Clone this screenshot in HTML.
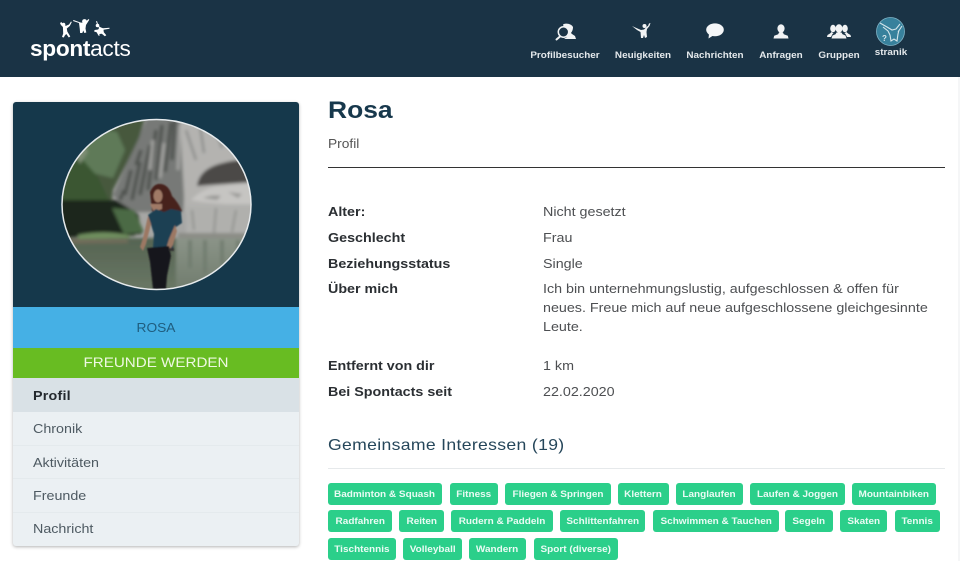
<!DOCTYPE html>
<html lang="de"><head><meta charset="utf-8"><title>Rosa</title>
<style>
html,body{margin:0;padding:0;background:#fff}
body{position:relative;width:960px;height:561px;overflow:hidden;font-family:"Liberation Sans",sans-serif;color:#444}
.b{position:absolute}
.t{position:absolute;white-space:nowrap;transform:scaleX(1.1);transform-origin:0 50%;line-height:16px;filter:blur(.3px)}
.c{transform-origin:50% 50%;text-align:center}
.nl{font-size:9px;font-weight:bold;color:#e4e9ec;width:100px;top:47px}
.k{font-size:13px;font-weight:bold;color:#2b2f33;left:328px}
.v{font-size:13px;color:#4d4f52;left:543px}
.m{font-size:13px;color:#4e5a62;left:33px}
.tag{position:absolute;height:22px;background:#2bcf8a;border-radius:3px;color:#eafbf4;font-size:9px;font-weight:bold;line-height:23px;text-align:center;white-space:nowrap}
.tag span{display:inline-block;transform:scaleX(1.11);filter:blur(.3px)}
svg{position:absolute;overflow:visible}
</style></head><body>

<div class="b" style="left:0;top:0;width:960px;height:77px;background:#1a3345"></div>
<div class="b" style="left:958px;top:77px;width:2px;height:484px;background:#f5f6f7"></div>

<!-- logo -->
<svg style="left:0;top:0" width="140" height="70" fill="#fff">
<path d="M60 23l1.500-1 1.500 3 1-1.500 1 .5.500 2 3.500-1.500 2-3 .8.500-2 4-3 2.500.5 3 1.800 3 1.200 2-1.500 1-2.500-3.500-1.500 1.500-1 2-1.800-.5 1.200-3.500-.3-6.500-2-2z"/>
<circle cx="63.500" cy="24.500" r="1.800"/>
<path d="M73 21l.5-1 7 2.500 4 .5 4-4 .8.700-3.300 5.300-.5 3.500.8 4-2 .5-1-2.500-1 2.500-2.200 0-.3-4-.8-6z"/>
<circle cx="84.500" cy="21.500" r="2.400"/>
<path d="M96 21.500l1-.5 1.500 5 2.500 1.500 2 .8 6.500-.5 0 1-6 1 .3 2.500 2.500 3-1.500 1-3-2.500-2.500 .2 .5 1.500-1.200 .3-2-3.500-2.500-.8.500-1.500 3.500-.5 1-1.500-1.500-2.500z"/>
<circle cx="97.500" cy="25.500" r="1.800"/>
</svg>
<div class="t" style="left:30px;top:39px;font-size:22px;font-weight:bold;color:#fff;line-height:20px;letter-spacing:-.3px;transform:scaleX(1.03)">spont<span style="font-weight:normal">acts</span></div>

<!-- nav icons -->
<svg style="left:555px;top:22px" width="24" height="20">
<path d="M8 2.500a7 6 0 0 1 10 2.500c0 3-1 4.500-2 6l1 1 3 2 1 3H9l3-2-1-2z" fill="#f1f3f4"/>
<circle cx="8.500" cy="10" r="5.200" fill="#1a3345" stroke="#f1f3f4" stroke-width="1.500"/>
<path d="M5 14.500L1.500 17.500" stroke="#f1f3f4" stroke-width="2" stroke-linecap="round"/>
</svg>
<svg style="left:631px;top:21px" width="24" height="20" fill="#f1f3f4">
<path d="M1 5l5.500 2.500 3.500 1.500 3-.5 3-3 1-.5 1-2.500 1.500-.5-1 3-2.500 3-.5 3 .5 5-2 1-1-3-1 3-2 0-.500-6L6 9z"/><circle cx="13.500" cy="5" r="2"/>
</svg>
<svg style="left:705px;top:23px" width="20" height="17" fill="#f4f6f7">
<ellipse cx="10" cy="6.800" rx="8.800" ry="6.400"/><path d="M4 11l-.5 4.500L9 12z"/>
</svg>
<svg style="left:773px;top:24px" width="16" height="15" fill="#f1f3f4">
<ellipse cx="8" cy="4.500" rx="3.600" ry="4.300"/><path d="M6 8.500h4l.8 1.800 4 1.500.7 2.700H.5l.7-2.700 4-1.500z"/>
</svg>
<svg style="left:827px;top:24px" width="24" height="16" fill="#f1f3f4">
<ellipse cx="12" cy="4.500" rx="3.500" ry="4.200"/><path d="M9.500 8.500h5l1 1.800 3 1.200 1 3H4.500l1-3 3-1.200z"/>
<ellipse cx="6" cy="4.500" rx="2.800" ry="3.800"/><path d="M4.500 8L3 9.500.5 11 0 13h4l1.500-3 1-.8z"/>
<ellipse cx="18" cy="4.500" rx="2.800" ry="3.800"/><path d="M19.500 8L21 9.500 23.500 11l.5 2h-4l-1.500-3-1-.8z"/>
</svg>
<svg style="left:876px;top:17px" width="29" height="29">
<circle cx="14.500" cy="14.500" r="14" fill="#38819c" stroke="#7fb3c6" stroke-width=".8"/>
<path d="M4 6l7 4 5 3 4-1 4-5M7 10l5 4 2 4 1 6 3-2 3 2 1-7 1-4M22 15l4-6" fill="none" stroke="#d5e5ea" stroke-width="1.100"/>
<text x="6" y="24" font-family="Liberation Sans" font-size="8" font-weight="bold" fill="#d5e5ea">?</text>
</svg>

<div class="t c nl" style="left:515px">Profilbesucher</div>
<div class="t c nl" style="left:593px">Neuigkeiten</div>
<div class="t c nl" style="left:665px">Nachrichten</div>
<div class="t c nl" style="left:731px">Anfragen</div>
<div class="t c nl" style="left:789px">Gruppen</div>
<div class="t c nl" style="left:841px;top:44px">stranik</div>

<!-- sidebar -->
<div class="b" style="left:13px;top:102px;width:286px;height:444px;border-radius:3px;box-shadow:0 1px 3px rgba(0,0,0,.3);background:#ebf0f3;overflow:hidden">
 <div class="b" style="left:0;top:0;width:286px;height:205px;background:#15384b"></div>
 <div class="b" style="left:0;top:205px;width:286px;height:41px;background:#45b0e5"></div>
 <div class="b" style="left:0;top:246px;width:286px;height:30px;background:#68bc22"></div>
 <div class="b" style="left:0;top:276px;width:286px;height:34px;background:#d9e1e6"></div>
 <div class="b" style="left:0;top:343px;width:286px;height:1px;background:#e4eaed"></div>
 <div class="b" style="left:0;top:376px;width:286px;height:1px;background:#e4eaed"></div>
 <div class="b" style="left:0;top:410px;width:286px;height:1px;background:#e4eaed"></div>
</div>

<svg style="left:61px;top:118px" width="192" height="173" viewBox="61 118 192 173">
<defs>
<clipPath id="cp"><ellipse cx="156.500" cy="204.500" rx="94" ry="84.500"/></clipPath>
<filter id="bl" x="-5%" y="-5%" width="110%" height="110%"><feGaussianBlur stdDeviation="1.500"/></filter>
<filter id="bs" x="-20%" y="-20%" width="140%" height="140%"><feGaussianBlur stdDeviation=".7"/></filter>
<linearGradient id="w" x1="0" y1="0" x2="0" y2="1"><stop offset="0" stop-color="#556452"/><stop offset="1" stop-color="#6b7866"/></linearGradient>
<linearGradient id="w2" x1="0" y1="0" x2="0" y2="1"><stop offset="0" stop-color="#8b9488"/><stop offset="1" stop-color="#6f7b6c"/></linearGradient>
</defs>
<g clip-path="url(#cp)">
<rect x="60" y="118" width="195" height="175" fill="#a6a6a4"/>
<g filter="url(#bl)">
<!-- dark streaked rock -->
<path d="M147 118L113 195 128 212H183L190 118z" fill="#777977"/>
<path d="M125 195l6-25M132 200l8-38M140 195l10-50M148 190l8-60M156 180l6-55M165 172l6-50M172 160l3-40M136 165l5-15M120 200l4-10" stroke="#4f5250" stroke-width="3.500" fill="none"/>
<path d="M150 170l3-30M160 178l4-35M178 170l2-45" stroke="#a4a4a2" stroke-width="3" fill="none"/>
<!-- light rock -->
<path d="M180 118h75v95h-70l-3-55z" fill="#b4b3b0"/>
<path d="M186 130l10 30M200 125l4 28M216 128l6 20" stroke="#8e8f8d" stroke-width="2.500" fill="none"/>
<!-- lion niche -->
<path d="M197 186q2-16 22-22 16-5 33-4v22l-30 2-14 1z" fill="#4b4847"/>
<path d="M191 200q14-14 32-14 16-3 32-2v20h-30l-22-2z" fill="#c6c5c2"/>
<path d="M203 198q10-4 18-2l-4 4zM228 192l14 2-4 4z" fill="#9a9a97"/>
<path d="M186 206h70v30h-70z" fill="#b0b0ad"/>
<path d="M216 208l-2 25M236 210l-4 22M192 210l2 20" stroke="#8d8f8b" stroke-width="1.800"/>
<!-- trees -->
<path d="M60 118h85l-6 20-12 25-14 27-2 20 24 10v16H60z" fill="#46593e"/>
<path d="M95 128l22 4 8 18-12 28-24-6-12-22z" fill="#5f7a58"/>
<path d="M60 165l22-6 16 18 14 30-20 4-32 0z" fill="#3a5633"/>
<path d="M73 150l10-8 5 10-8 12z" fill="#7e8e74"/>
<path d="M60 200h56l22 14 4 20-82 4z" fill="#1d281a"/>
<path d="M112 208l22 2 10 22-20 2z" fill="#4c6a44"/>
<!-- shore -->
<path d="M178 233h78v7h-78z" fill="#8b8c86"/>
<rect x="60" y="238" width="130" height="55" fill="url(#w)"/>
<rect x="176" y="238" width="80" height="55" fill="url(#w2)"/>
<path d="M190 240v28M205 240v34M222 240v24M238 240v20" stroke="#6f7c6e" stroke-width="3.500" fill="none"/>
<path d="M78 235q26-5 50 0l2 3-52 1z" fill="#6f8f5e"/>
<path d="M68 239l60 0v4l-60 1z" fill="#6f6c5a"/>
</g>
<g filter="url(#bs)">
<path d="M150 192q4-9 11-8 8 1 11 12 6 6 10 15l-8 5-14-2-8-3z" fill="#47201e"/>
<ellipse cx="158" cy="196" rx="4.500" ry="6.500" fill="#a07a66"/>
<path d="M150 204h12v5l-8 3z" fill="#a07a66"/>
<path d="M148 215l8-6 8 3 7-3 10 2 1 12-6 4-2 6-1 15-20 0 1-14z" fill="#1a3f52"/>
<path d="M148 216l-5 22-3 9 3 4 3-7 5-20zM175 225l2 6-4 14-5 7-2-3 3-10z" fill="#9c7864"/>
<path d="M147 248l22-2 2 10-4 20-1 13h-13l-3-27z" fill="#14151a"/>
<rect x="169" y="248" width="5" height="3" fill="#333"/>
</g>
</g>
<ellipse cx="156.500" cy="204.500" rx="94.500" ry="85" fill="none" stroke="#e6eaec" stroke-width="1.500"/>
</svg>

<div class="t c" style="left:56px;top:320px;width:200px;font-size:12.500px;color:#1f5d7f">ROSA</div>
<div class="t c" style="left:56px;top:354.500px;width:200px;font-size:13.800px;color:#eef8e2">FREUNDE WERDEN</div>
<div class="t m" style="top:388px;font-weight:bold;color:#24292e;letter-spacing:.2px">Profil</div>
<div class="t m" style="top:421px">Chronik</div>
<div class="t m" style="top:455px">Aktivitäten</div>
<div class="t m" style="top:488px">Freunde</div>
<div class="t m" style="top:521px">Nachricht</div>

<!-- main -->
<div class="t" style="left:328px;top:99px;font-size:24px;font-weight:bold;color:#17384c;line-height:24px">Rosa</div>
<div class="t" style="left:328px;top:136px;font-size:12.500px;color:#555">Profil</div>
<div class="b" style="left:328px;top:167px;width:617px;height:1px;background:#333"></div>

<div class="t k" style="top:204px">Alter:</div><div class="t v" style="top:204px">Nicht gesetzt</div>
<div class="t k" style="top:229.500px">Geschlecht</div><div class="t v" style="top:229.500px">Frau</div>
<div class="t k" style="top:255.500px">Beziehungsstatus</div><div class="t v" style="top:255.500px">Single</div>
<div class="t k" style="top:281px">Über mich</div>
<div class="t v" style="top:281px">Ich bin unternehmungslustig, aufgeschlossen &amp; offen für</div>
<div class="t v" style="top:300px">neues. Freue mich auf neue aufgeschlossene gleichgesinnte</div>
<div class="t v" style="top:319px">Leute.</div>
<div class="t k" style="top:358px">Entfernt von dir</div><div class="t v" style="top:358px">1 km</div>
<div class="t k" style="top:383.500px">Bei Spontacts seit</div><div class="t v" style="top:383.500px">22.02.2020</div>

<div class="t" style="left:328px;top:438px;font-size:16px;letter-spacing:.3px;color:#25465a">Gemeinsame Interessen (19)</div>
<div class="b" style="left:328px;top:468px;width:617px;height:1px;background:#e6e9eb"></div>

<div class="tag" style="left:328px;top:483px;width:114px"><span>Badminton &amp; Squash</span></div>
<div class="tag" style="left:450px;top:483px;width:48px"><span>Fitness</span></div>
<div class="tag" style="left:505px;top:483px;width:106px"><span>Fliegen &amp; Springen</span></div>
<div class="tag" style="left:618px;top:483px;width:51px"><span>Klettern</span></div>
<div class="tag" style="left:676px;top:483px;width:67px"><span>Langlaufen</span></div>
<div class="tag" style="left:750px;top:483px;width:95px"><span>Laufen &amp; Joggen</span></div>
<div class="tag" style="left:852px;top:483px;width:84px"><span>Mountainbiken</span></div>

<div class="tag" style="left:328px;top:510px;width:64px"><span>Radfahren</span></div>
<div class="tag" style="left:399px;top:510px;width:45px"><span>Reiten</span></div>
<div class="tag" style="left:451px;top:510px;width:102px"><span>Rudern &amp; Paddeln</span></div>
<div class="tag" style="left:560px;top:510px;width:85px"><span>Schlittenfahren</span></div>
<div class="tag" style="left:653px;top:510px;width:126px"><span>Schwimmen &amp; Tauchen</span></div>
<div class="tag" style="left:785px;top:510px;width:48px"><span>Segeln</span></div>
<div class="tag" style="left:840px;top:510px;width:47px"><span>Skaten</span></div>
<div class="tag" style="left:895px;top:510px;width:45px"><span>Tennis</span></div>

<div class="tag" style="left:328px;top:538px;width:68px"><span>Tischtennis</span></div>
<div class="tag" style="left:403px;top:538px;width:59px"><span>Volleyball</span></div>
<div class="tag" style="left:469px;top:538px;width:57px"><span>Wandern</span></div>
<div class="tag" style="left:534px;top:538px;width:84px"><span>Sport (diverse)</span></div>

</body></html>
